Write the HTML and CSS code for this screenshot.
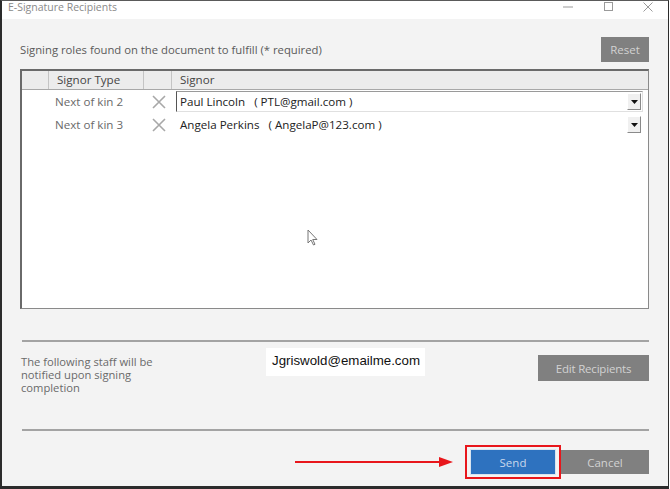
FILE: index.html
```html
<!DOCTYPE html>
<html>
<head>
<meta charset="utf-8">
<link rel="stylesheet" href="styles.css">
</head>
<body>
<div class="window">
  <div class="titlebar">
    <span class="title">E-Signature Recipients</span>
    <div class="controls">
      <svg class="ctl" width="12" height="12" viewBox="0 0 12 12"><line x1="1" y1="6" x2="11" y2="6" stroke="#9a9a9a" stroke-width="1"/></svg>
      <svg class="ctl" width="12" height="12" viewBox="0 0 12 12"><rect x="2.5" y="1.5" width="8" height="8" fill="none" stroke="#9a9a9a" stroke-width="1"/></svg>
      <svg class="ctl" width="12" height="12" viewBox="0 0 12 12"><path d="M1.5 1.5 L10.5 10.5 M10.5 1.5 L1.5 10.5" stroke="#9a9a9a" stroke-width="1"/></svg>
    </div>
  </div>
  <div class="content">
    <div class="toprow">
      <span class="label">Signing roles found on the document to fulfill (* required)</span>
      <button class="btn reset">Reset</button>
    </div>
    <div class="grid">
      <div class="ghead">
        <div class="hc c0"></div>
        <div class="hc c1">Signor Type</div>
        <div class="hc c2"></div>
        <div class="hc c3">Signor</div>
      </div>
      <div class="grow">
        <div class="c0"></div>
        <div class="c1 type">Next of kin 2</div>
        <div class="c2 x"><svg width="14" height="14" viewBox="0 0 14 14"><path d="M1 1 L13 13 M13 1 L1 13" stroke="#a8a8a8" stroke-width="1.6"/></svg></div>
        <div class="c3 combo active">
          <span class="ctext">Paul Lincoln&nbsp;&nbsp;&nbsp;( PTL@gmail.com )</span>
          <span class="drop"><svg width="7" height="4" viewBox="0 0 7 4"><path d="M0 0 H7 L3.5 4 Z" fill="#111"/></svg></span>
        </div>
      </div>
      <div class="grow">
        <div class="c0"></div>
        <div class="c1 type">Next of kin 3</div>
        <div class="c2 x"><svg width="14" height="14" viewBox="0 0 14 14"><path d="M1 1 L13 13 M13 1 L1 13" stroke="#a8a8a8" stroke-width="1.6"/></svg></div>
        <div class="c3 combo">
          <span class="ctext">Angela Perkins&nbsp;&nbsp;&nbsp;( AngelaP@123.com )</span>
          <span class="drop"><svg width="7" height="4" viewBox="0 0 7 4"><path d="M0 0 H7 L3.5 4 Z" fill="#111"/></svg></span>
        </div>
      </div>
      <svg class="cursor" width="12" height="18" viewBox="0 0 12 18"><path d="M1 1 L1 14 L4 11 L6.5 16 L8 15.3 L5.7 10.5 L10 10.5 Z" fill="#fff" stroke="#777" stroke-width="1"/></svg>
    </div>
    <hr class="sep first">
    <div class="staffrow">
      <div class="stafftext">The following staff will be notified upon signing completion</div>
      <div class="email">Jgriswold@emailme.com</div>
      <button class="btn edit">Edit Recipients</button>
    </div>
    <hr class="sep second">
    <div class="bottomrow">
      <svg class="arrow" width="160" height="12" viewBox="0 0 160 12"><line x1="0" y1="6" x2="146" y2="6" stroke="#e8161b" stroke-width="2"/><path d="M144 1 L158 6 L144 11 Z" fill="#e8161b"/></svg>
      <div class="redframe"><button class="btn send">Send</button></div>
      <button class="btn cancel">Cancel</button>
    </div>
  </div>
</div>
</body>
</html>
```
FILE: styles.css
```css
* { box-sizing: border-box; }
html, body { margin: 0; padding: 0; }
body {
  width: 670px;
  height: 489px;
  background: #ffffff;
  font-family: "Open Sans", "DejaVu Sans", sans-serif;
  overflow: hidden;
}
.window {
  width: 669px;
  height: 489px;
  border-left: 2px solid #2b2b2b;
  border-right: 1px solid #2b2b2b;
  border-top: 1px solid #5a5a5a;
  border-bottom: 3px solid #2b2b2b;
  display: flex;
  flex-direction: column;
}
.titlebar {
  height: 18px;
  background: #ffffff;
  display: flex;
  align-items: flex-start;
  justify-content: space-between;
  flex: none;
}
.title {
  font-size: 10.5px;
  color: #8a8a8a;
  line-height: 12px;
  margin-left: 6px;
}
.controls {
  display: flex;
  gap: 28px;
  margin-right: 14px;
}
.content {
  flex: 1;
  background: #f3f3f3;
  padding: 18px 19px 0 18px;
  display: flex;
  flex-direction: column;
}
.toprow {
  display: flex;
  justify-content: space-between;
  align-items: center;
  height: 25px;
}
.label {
  font-size: 11.3px;
  color: #5a5a5a;
}
.btn {
  border: none;
  font-family: "Open Sans", "DejaVu Sans", sans-serif;
  font-size: 11.5px;
  color: #d2d2d2;
  background: #808080;
  padding: 0;
  cursor: default;
}
.reset {
  width: 48px;
  height: 25px;
}
.grid {
  position: relative;
  margin-top: 7px;
  height: 240px;
  background: #ffffff;
  border-top: 2px solid #6a6a6a;
  border-left: 2px solid #6a6a6a;
  border-right: 1px solid #8a8a8a;
  border-bottom: 1px solid #8a8a8a;
}
.ghead {
  display: flex;
  height: 19px;
  background: #ececec;
  border-bottom: 1px solid #a8a8a8;
}
.hc {
  font-size: 11.6px;
  color: #454545;
  line-height: 18px;
  border-right: 1px solid #c4c4c4;
}
.hc.c3 { border-right: none; flex: 1; }
.c0 { width: 27px; flex: none; }
.c1 { width: 95px; flex: none; padding-left: 8px; }
.c2 { width: 28px; flex: none; }
.c3 { padding-left: 8px; }
.grow {
  display: flex;
  height: 23px;
  align-items: center;
}
.type {
  font-size: 11.6px;
  color: #6a6a6a;
  padding-left: 6px;
}
.x {
  display: flex;
  justify-content: center;
  padding-left: 2px;
}
.combo {
  flex: 1;
  margin-left: 4px;
  margin-right: 5px;
  height: 21px;
  display: flex;
  align-items: center;
  justify-content: space-between;
  padding-left: 3px;
  padding-right: 1px;
  border: 1px solid transparent;
}
.combo.active {
  border-left: 1px solid #555;
  border-top: 1px solid #9a9a9a;
  border-right: 1px solid #e0e0e0;
  border-bottom: 1px solid #e0e0e0;
}
.ctext {
  font-size: 11.6px;
  color: #222;
}
.drop {
  width: 14px;
  height: 17px;
  background: #f0f0f0;
  border-top: 1px solid #fff;
  border-left: 1px solid #fff;
  border-right: 1px solid #8a8a8a;
  border-bottom: 1px solid #8a8a8a;
  display: flex;
  align-items: center;
  justify-content: center;
}
.cursor {
  position: absolute;
  left: 285px;
  top: 158px;
}
.sep {
  margin: 0;
  border: none;
  height: 2px;
  background: #a3a3a3;
  margin-left: 2px;
}
.sep.first { margin-top: 31px; }
.sep.second { margin-top: 0; }
.staffrow {
  display: flex;
  align-items: flex-start;
  height: 87px;
  padding-top: 6px;
}
.stafftext {
  width: 150px;
  font-size: 11.2px;
  line-height: 13px;
  color: #6a6a6a;
  margin-top: 7px;
  margin-left: 1px;
}
.email {
  margin-left: 95px;
  background: #ffffff;
  font-family: "Liberation Sans", Arial, sans-serif;
  font-size: 13.3px;
  color: #111;
  height: 28px;
  line-height: 26px;
  padding: 0 5px 0 6px;
}
.edit {
  margin-left: auto;
  width: 111px;
  height: 26px;
  margin-top: 7px;
  letter-spacing: -0.2px;
}
.bottomrow {
  display: flex;
  align-items: center;
  justify-content: flex-end;
  margin-top: 14px;
}
.arrow { margin-right: 10px; }
.redframe {
  border: 2px solid #e8161b;
  padding: 2px 3px;
  background: #f3f3f3;
}
.send {
  width: 86px;
  height: 26px;
  background: #2e72bf;
  border: 1px solid #d8e4f0;
  color: #c9d8ec;
}
.cancel {
  width: 88px;
  height: 24px;
}
```
